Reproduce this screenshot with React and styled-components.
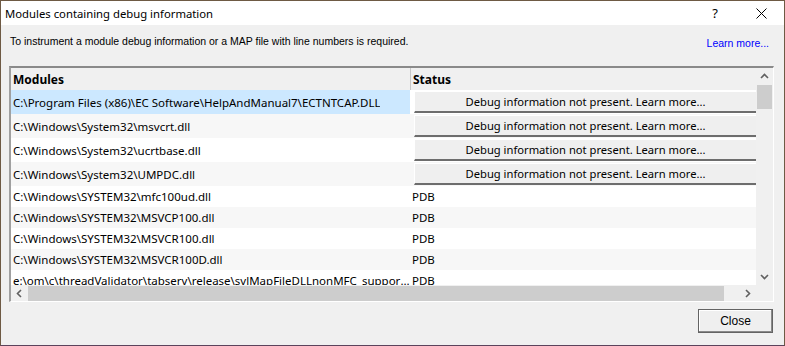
import React from "react";
import styled, { createGlobalStyle } from "styled-components";

const GlobalStyle = createGlobalStyle`
  html, body {
    margin: 0;
    padding: 0;
    background: #f0f0f0;
  }
  * {
    box-sizing: border-box;
  }
`;

const modules = [
  { path: "C:\\Program Files (x86)\\EC Software\\HelpAndManual7\\ECTNTCAP.DLL", status: null, selected: true },
  { path: "C:\\Windows\\System32\\msvcrt.dll", status: null },
  { path: "C:\\Windows\\System32\\ucrtbase.dll", status: null },
  { path: "C:\\Windows\\System32\\UMPDC.dll", status: null },
  { path: "C:\\Windows\\SYSTEM32\\mfc100ud.dll", status: "PDB" },
  { path: "C:\\Windows\\SYSTEM32\\MSVCP100.dll", status: "PDB" },
  { path: "C:\\Windows\\SYSTEM32\\MSVCR100.dll", status: "PDB" },
  { path: "C:\\Windows\\SYSTEM32\\MSVCR100D.dll", status: "PDB" },
  { path: "e:\\om\\c\\threadValidator\\tabserv\\release\\svlMapFileDLLnonMFC_support....", status: "PDB" },
];

const Window = styled.div`
  width: 785px;
  height: 346px;
  display: flex;
  flex-direction: column;
  background: #f0f0f0;
  border: 1px solid #6e5a44;
  border-bottom-color: #5b435c;
  font-family: "Liberation Sans", Arial, sans-serif;
  color: #000;
  overflow: hidden;
`;

const TitleBar = styled.div`
  height: 24px;
  flex: none;
  display: flex;
  align-items: center;
  background: #fff;
  padding-left: 4px;
`;

const Title = styled.div`
  flex: 1;
  font-family: "Noto Sans", sans-serif;
  font-size: 11.3px;
  color: #000;
`;

const TitleButton = styled.div`
  width: 46px;
  height: 24px;
  display: flex;
  align-items: center;
  justify-content: center;
  font-family: "Noto Sans", sans-serif;
  font-size: 13px;
`;

const Body = styled.div`
  flex: 1;
  display: flex;
  flex-direction: column;
  padding: 0 11px 0 8px;
`;

const InfoRow = styled.div`
  display: flex;
  justify-content: space-between;
  align-items: flex-start;
  height: 41px;
  padding: 10px 4px 0 1px;
  font-family: "Liberation Sans", Arial, sans-serif;
  font-size: 10.5px;
`;

const Link = styled.a`
  color: #0000ff;
  text-decoration: none;
  padding-top: 2px;
`;

const ListBox = styled.div`
  width: 765px;
  height: 236px;
  display: grid;
  grid-template-columns: 1fr 17px;
  grid-template-rows: 1fr 16px;
  border-style: solid;
  border-width: 2px 1px 1px 2px;
  border-color: #8a8a8a #ffffff #ffffff #a0a0a0;
  background: #fff;
  font-family: "Noto Sans", sans-serif;
  font-size: 11.5px;
`;

const Viewport = styled.div`
  overflow: hidden;
  display: flex;
  flex-direction: column;
`;

const Columns = styled.div`
  display: grid;
  grid-template-columns: 399px 1fr;
  align-items: stretch;
`;

const HeaderCell = styled.div`
  height: 22px;
  display: flex;
  align-items: center;
  padding-left: 2px;
  background: #f0f0f0;
  font-weight: bold;
  font-size: 12px;
  border-left: ${(p) => (p.$sep ? "1px solid #c8c8c8" : "none")};
`;

const Cell = styled.div`
  height: ${(p) => (p.$tall ? 24 : 21)}px;
  display: flex;
  align-items: center;
  padding-left: ${(p) => (p.$button ? 4 : 2)}px;
  white-space: nowrap;
  overflow: hidden;
  text-overflow: ellipsis;
  background: ${(p) => (p.$selected ? "#cce8ff" : p.$alt ? "#f7f7f7" : "#ffffff")};
`;

const CellText = styled.span`
  overflow: hidden;
  text-overflow: ellipsis;
  white-space: nowrap;
`;

const StatusButton = styled.div`
  flex: 1;
  height: 22px;
  display: flex;
  align-items: center;
  justify-content: center;
  background: #efefef;
  border-top: 1px solid #fff;
  border-left: 1px solid #fff;
  border-bottom: 2px solid #6d6d6d;
  font-size: 11.2px;
  color: #000;
`;

const VScroll = styled.div`
  background: #f0f0f0;
  display: flex;
  flex-direction: column;
  align-items: center;
`;

const HScroll = styled.div`
  background: #f0f0f0;
  display: flex;
  align-items: center;
`;

const Corner = styled.div`
  background: #f0f0f0;
`;

const Arrow = styled.div`
  width: 17px;
  height: ${(p) => (p.$horizontal ? 16 : 17)}px;
  display: flex;
  align-items: center;
  justify-content: center;
  flex: none;
`;

const VThumb = styled.div`
  width: 15px;
  height: 24px;
  background: #cdcdcd;
`;

const VTrack = styled.div`
  flex: 1;
`;

const HThumb = styled.div`
  height: 15px;
  flex: 1;
  background: #cdcdcd;
  margin-right: 15px;
`;

const Footer = styled.div`
  flex: 1;
  display: flex;
  justify-content: flex-end;
  align-items: flex-start;
  padding-top: 7px;
`;

const CloseButton = styled.div`
  width: 75px;
  height: 24px;
  display: flex;
  align-items: center;
  justify-content: center;
  background: #efefef;
  border: 1px solid #646464;
  box-shadow: inset -1px -1px 0 #8a8a8a, inset 1px 1px 0 #ffffff;
  font-family: "Liberation Sans Narrow", "Liberation Sans", Arial, sans-serif;
  font-size: 12px;
`;

const Chevron = ({ dir }) => {
  const pts = {
    up: "1,6 4.5,2.5 8,6",
    down: "1,3 4.5,6.5 8,3",
    left: "6,1 2.5,4.5 6,8",
    right: "3,1 6.5,4.5 3,8",
  }[dir];
  return (
    <svg width="9" height="9" viewBox="0 0 9 9">
      <polyline points={pts} fill="none" stroke="#606060" strokeWidth="1.6" />
    </svg>
  );
};

export default function App() {
  return (
    <Window>
      <GlobalStyle />
      <TitleBar>
        <Title>Modules containing debug information</Title>
        <TitleButton>?</TitleButton>
        <TitleButton>
          <svg width="11" height="11" viewBox="0 0 11 11">
            <path d="M0.5 0.5 L10.5 10.5 M10.5 0.5 L0.5 10.5" stroke="#000" strokeWidth="1" />
          </svg>
        </TitleButton>
      </TitleBar>
      <Body>
        <InfoRow>
          <div>To instrument a module debug information or a MAP file with line numbers is required.</div>
          <Link>Learn more...</Link>
        </InfoRow>
        <ListBox>
          <Viewport>
            <Columns>
              <HeaderCell>Modules</HeaderCell>
              <HeaderCell $sep>Status</HeaderCell>
              {modules.map((m, i) => {
                const tall = m.status === null;
                const alt = i % 2 === 1;
                return (
                  <React.Fragment key={i}>
                    <Cell $tall={tall} $alt={alt} $selected={m.selected}>
                      <CellText>{m.path}</CellText>
                    </Cell>
                    <Cell $tall={tall} $alt={alt} $button={tall}>
                      {tall ? (
                        <StatusButton>Debug information not present. Learn more...</StatusButton>
                      ) : (
                        m.status
                      )}
                    </Cell>
                  </React.Fragment>
                );
              })}
            </Columns>
          </Viewport>
          <VScroll>
            <Arrow>
              <Chevron dir="up" />
            </Arrow>
            <VThumb />
            <VTrack />
            <Arrow>
              <Chevron dir="down" />
            </Arrow>
          </VScroll>
          <HScroll>
            <Arrow $horizontal>
              <Chevron dir="left" />
            </Arrow>
            <HThumb />
            <Arrow $horizontal>
              <Chevron dir="right" />
            </Arrow>
          </HScroll>
          <Corner />
        </ListBox>
        <Footer>
          <CloseButton>Close</CloseButton>
        </Footer>
      </Body>
    </Window>
  );
}
